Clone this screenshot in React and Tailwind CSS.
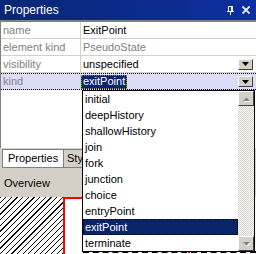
import React from 'react';

const rows = [
  { label: 'name', value: 'ExitPoint', tone: 'text-black' },
  { label: 'element kind', value: 'PseudoState', tone: 'text-[#808080]' },
  { label: 'visibility', value: 'unspecified', tone: 'text-black', combo: true },
];

const kinds = [
  'initial',
  'deepHistory',
  'shallowHistory',
  'join',
  'fork',
  'junction',
  'choice',
  'entryPoint',
  'exitPoint',
  'terminate',
];

function ComboButton() {
  return (
    <div className="flex h-[11px] w-[15px] items-center justify-center border border-t-white border-l-white border-r-[#404040] border-b-[#404040] bg-[#d4d0c8]">
      <svg width="7" height="4" viewBox="0 0 7 4">
        <path d="M0 0h7L3.5 4z" fill="#000" />
      </svg>
    </div>
  );
}

function ScrollButton({ up }) {
  return (
    <div className="flex h-[15px] w-full items-center justify-center border border-t-white border-l-white border-r-[#404040] border-b-[#404040] bg-[#d4d0c8]">
      <svg width="9" height="6" viewBox="0 0 9 6">
        {up ? (
          <>
            <path d="M1 5h7L4.5 1.5z" fill="#fff" transform="translate(1 1)" />
            <path d="M1 5h7L4.5 1.5z" fill="#808080" />
          </>
        ) : (
          <>
            <path d="M1 1h7L4.5 4.5z" fill="#fff" transform="translate(1 1)" />
            <path d="M1 1h7L4.5 4.5z" fill="#808080" />
          </>
        )}
      </svg>
    </div>
  );
}

export default function App() {
  return (
    <div className="relative flex h-[254px] w-[256px] flex-col overflow-hidden bg-white font-['Liberation_Sans',Arial,sans-serif] text-[11px] leading-none text-black">
      {/* title bar */}
      <div className="flex h-[20px] shrink-0 items-center bg-gradient-to-r from-[#0a2675] to-[#0c30a0] pl-[4px] pr-[6px] text-white">
        <span className="text-[12px]">Properties</span>
        <div className="ml-auto flex items-center gap-[8px]">
          <svg width="7" height="9" viewBox="0 0 7 9" fill="none" stroke="#fff">
            <path d="M1.5 0.5h4v5h-4z" />
            <path d="M0 5.5h7M3.5 5.5v3.5M4.5 0.5v5" />
          </svg>
          <svg width="8" height="8" viewBox="0 0 8 8" stroke="#fff" strokeWidth="1.6">
            <path d="M0.5 0.5l7 7M7.5 0.5l-7 7" />
          </svg>
        </div>
      </div>

      {/* property table */}
      <div className="shrink-0 border-t-2 border-l border-t-[#808080] border-l-[#808080]">
        {rows.map((row) => (
          <div key={row.label} className="flex h-[17px] border-b border-[#d4d0c8]">
            <div className="flex w-[80px] items-center border-r border-[#d4d0c8] pl-[2px] text-[#808080]">
              {row.label}
            </div>
            <div className={`flex flex-1 items-center pl-[2px] pr-[3px] ${row.tone}`}>
              {row.value}
              {row.combo && <div className="ml-auto"><ComboButton /></div>}
            </div>
          </div>
        ))}
        <div className="flex h-[17px] border-y border-dotted border-black bg-[#dcdcf8]">
          <div className="flex w-[80px] items-center border-r border-[#d4d0c8] pl-[2px] text-[#808080]">
            kind
          </div>
          <div className="flex flex-1 items-center pr-[3px]">
            <span className="flex h-[14px] items-center border border-dotted border-[#8a8a40] bg-[#0a246a] px-[1px] text-white">
              exitPoint
            </span>
            <div className="ml-auto"><ComboButton /></div>
          </div>
        </div>
      </div>

      <div className="flex-1 border-l border-[#808080]" />

      {/* tabs */}
      <div className="flex h-[22px] shrink-0 items-start bg-[#d4d0c8] pl-[2px] pt-[1px]">
        <div className="flex h-[19px] w-[62px] items-center border border-[#808080] bg-white pl-[5px]">
          Properties
        </div>
        <div className="flex h-[19px] w-[18px] items-center overflow-hidden whitespace-nowrap border-y border-[#808080] bg-[#d4d0c8] pl-[3px]">
          Sty
        </div>
      </div>

      {/* overview */}
      <div className="flex h-[27px] shrink-0 items-center bg-[#d4d0c8] pl-[4px]">
        Overview
      </div>

      {/* canvas */}
      <div className="flex h-[57px] shrink-0">
        <div className="w-[63px] bg-[image:repeating-linear-gradient(135deg,#000_0,#000_0.8px,#fff_0.8px,#fff_4px)]" />
        <div className="relative flex-1">
          <div className="absolute left-0 top-0 h-full w-[2px] bg-[#f00]" />
          <div className="absolute left-0 top-0 h-[2px] w-[20px] bg-[#f00]" />
          <div className="absolute bottom-[1px] left-[20px] right-0 border-t-2 border-dashed border-black" />
          <div className="absolute bottom-[1px] left-[125px] h-[2px] w-[2px] bg-[#f00]" />
        </div>
      </div>

      {/* dropdown list */}
      <div className="absolute left-[82px] top-[90px] flex h-[162px] w-[173px] border border-black bg-white">
        <div className="flex flex-1 flex-col">
          {kinds.map((k) =>
            k === 'exitPoint' ? (
              <div
                key={k}
                className="flex h-[16px] items-center border border-dotted border-black bg-[#0a246a] pl-[1px] text-white"
              >
                {k}
              </div>
            ) : (
              <div key={k} className="flex h-[16px] items-center pl-[2px]">
                {k}
              </div>
            )
          )}
        </div>
        <div className="flex w-[16px] flex-col bg-[image:repeating-conic-gradient(#d4d0c8_0_25%,#fff_0_50%)] bg-[length:2px_2px]">
          <ScrollButton up />
          <div className="flex-1" />
          <ScrollButton />
        </div>
      </div>
    </div>
  );
}
